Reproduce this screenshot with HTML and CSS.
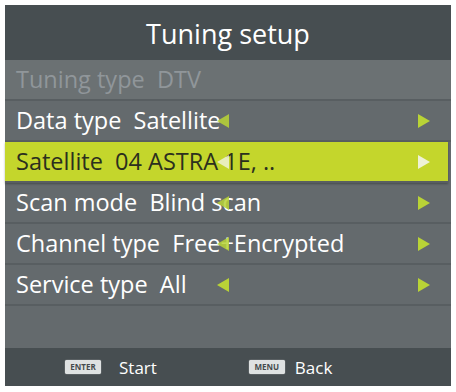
FILE: index.html
```html
<!DOCTYPE html>
<html lang="en">
<head>
    <meta charset="UTF-8">
    <title>Tuning setup</title>
    <link rel="stylesheet" href="styles.css">
</head>
<body>
    <div class="panel">
        <div class="header">Tuning setup</div>

        <div class="row disabled">Tuning type&nbsp; DTV</div>
        <div class="row">
            Data type&nbsp; Satellite
            <span class="arrow left"></span>
            <span class="arrow right"></span>
        </div>
        <div class="row selected">
            Satellite&nbsp; 04 ASTRA 1E, ..
            <span class="arrow left"></span>
            <span class="arrow right"></span>
        </div>
        <div class="row">
            Scan mode&nbsp; Blind scan
            <span class="arrow left"></span>
            <span class="arrow right"></span>
        </div>
        <div class="row">
            Channel type&nbsp; Free+Encrypted
            <span class="arrow left"></span>
            <span class="arrow right"></span>
        </div>
        <div class="row">
            Service type&nbsp; All
            <span class="arrow left solid"></span>
            <span class="arrow right"></span>
        </div>
        <div class="row empty"></div>

        <div class="footer">
            <div class="hint"><span class="key">ENTER</span> Start</div>
            <div class="hint back"><span class="key">MENU</span> Back</div>
        </div>
    </div>
</body>
</html>
```

FILE: styles.css
```css
body {
    margin: 0;
    background: #ffffff;
    font-family: 'Open Sans', 'Noto Sans', sans-serif;
    color: #ffffff;
}

.panel {
    margin: 5px 5px 0 5px;
    width: 446px;
    background: #646a6d;
}

.header {
    height: 55px;
    background: #474e51;
    font-size: 27px;
    line-height: 57px;
    text-align: center;
}

.row {
    position: relative;
    height: 39px;
    line-height: 38px;
    padding-left: 11px;
    font-size: 23.5px;
    border-bottom: 2px solid #585e61;
    white-space: nowrap;
}

.row.disabled {
    background: #6b7173;
    color: #90969a;
}

.row.selected {
    background: #c4d62c;
    color: #2b2f1e;
    margin-right: 3px;
    box-shadow: 0 1px 2px rgba(0, 0, 0, 0.3);
}

.row.empty {
    height: 42px;
    border-bottom: none;
}

.arrow {
    position: absolute;
    top: 13px;
    width: 0;
    height: 0;
    border-top: 7px solid transparent;
    border-bottom: 7px solid transparent;
}

.arrow.left {
    left: 212px;
    border-right: 12px solid #b9d336;
    opacity: 0.85;
}

.arrow.left.solid {
    opacity: 1;
}

.arrow.right {
    left: 413px;
    border-left: 12px solid #b9d336;
}

.selected .arrow.left,
.selected .arrow.right {
    border-left-color: #eef2d6;
    border-right-color: #eef2d6;
}

.footer {
    height: 38px;
    background: #474e51;
    display: flex;
    align-items: center;
    padding-left: 60px;
    gap: 92px;
    font-size: 17px;
}

.hint {
    display: flex;
    align-items: center;
    gap: 18px;
}

.hint.back {
    gap: 10px;
}

.key {
    display: inline-block;
    width: 36px;
    height: 14px;
    background: #dfe2e2;
    color: #454b4d;
    font-size: 8px;
    font-weight: bold;
    line-height: 14px;
    text-align: center;
    border-radius: 2px;
    box-shadow: 0 0 1px #ffffff;
}
```
